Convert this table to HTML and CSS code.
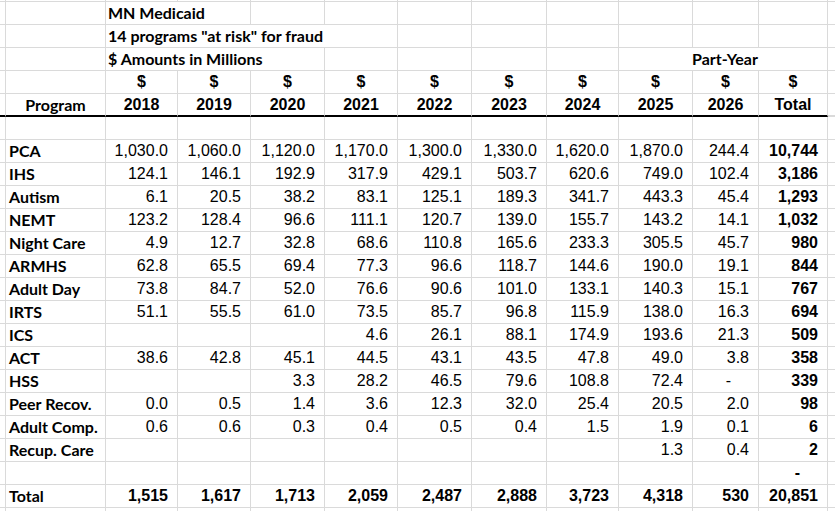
FILE: index.html
```html
<!DOCTYPE html>
<html>
<head>
<meta charset="utf-8">
<link rel="stylesheet" href="styles.css">
</head>
<body>
<div class="sheet">
  <div class="row top"><div class="c"></div><div class="c"></div><div class="c"></div><div class="c"></div><div class="c"></div><div class="c"></div><div class="c"></div><div class="c"></div><div class="c"></div><div class="c"></div><div class="c"></div><div class="c"></div><div class="c end"></div></div>

  <div class="row"><div class="c"></div><div class="c"></div><div class="c t s2">MN Medicaid</div><div class="c"></div><div class="c"></div><div class="c"></div><div class="c"></div><div class="c"></div><div class="c"></div><div class="c"></div><div class="c"></div><div class="c end"></div></div>

  <div class="row"><div class="c"></div><div class="c"></div><div class="c t s4">14 programs "at risk" for fraud</div><div class="c"></div><div class="c"></div><div class="c"></div><div class="c"></div><div class="c"></div><div class="c"></div><div class="c end"></div></div>

  <div class="row"><div class="c"></div><div class="c"></div><div class="c t s3">$ Amounts in Millions</div><div class="c"></div><div class="c"></div><div class="c"></div><div class="c"></div><div class="c t s3 pc">Part-Year</div><div class="c end"></div></div>

  <div class="row"><div class="c"></div><div class="c"></div><div class="c h">$</div><div class="c h">$</div><div class="c h">$</div><div class="c h">$</div><div class="c h">$</div><div class="c h">$</div><div class="c h">$</div><div class="c h">$</div><div class="c h">$</div><div class="c h">$</div><div class="c end"></div></div>

  <div class="row hdr"><div class="c"></div><div class="c lbl ctr">Program</div><div class="c h">2018</div><div class="c h">2019</div><div class="c h">2020</div><div class="c h">2021</div><div class="c h">2022</div><div class="c h">2023</div><div class="c h">2024</div><div class="c h">2025</div><div class="c h">2026</div><div class="c h">Total</div><div class="c end"></div></div>

  <div class="row"><div class="c"></div><div class="c"></div><div class="c"></div><div class="c"></div><div class="c"></div><div class="c"></div><div class="c"></div><div class="c"></div><div class="c"></div><div class="c"></div><div class="c"></div><div class="c"></div><div class="c end"></div></div>

  <div class="row"><div class="c"></div><div class="c lbl">PCA</div><div class="c n">1,030.0</div><div class="c n">1,060.0</div><div class="c n">1,120.0</div><div class="c n">1,170.0</div><div class="c n">1,300.0</div><div class="c n">1,330.0</div><div class="c n">1,620.0</div><div class="c n">1,870.0</div><div class="c n">244.4</div><div class="c n b">10,744</div><div class="c end"></div></div>

  <div class="row"><div class="c"></div><div class="c lbl">IHS</div><div class="c n">124.1</div><div class="c n">146.1</div><div class="c n">192.9</div><div class="c n">317.9</div><div class="c n">429.1</div><div class="c n">503.7</div><div class="c n">620.6</div><div class="c n">749.0</div><div class="c n">102.4</div><div class="c n b">3,186</div><div class="c end"></div></div>

  <div class="row"><div class="c"></div><div class="c lbl">Autism</div><div class="c n">6.1</div><div class="c n">20.5</div><div class="c n">38.2</div><div class="c n">83.1</div><div class="c n">125.1</div><div class="c n">189.3</div><div class="c n">341.7</div><div class="c n">443.3</div><div class="c n">45.4</div><div class="c n b">1,293</div><div class="c end"></div></div>

  <div class="row"><div class="c"></div><div class="c lbl">NEMT</div><div class="c n">123.2</div><div class="c n">128.4</div><div class="c n">96.6</div><div class="c n">111.1</div><div class="c n">120.7</div><div class="c n">139.0</div><div class="c n">155.7</div><div class="c n">143.2</div><div class="c n">14.1</div><div class="c n b">1,032</div><div class="c end"></div></div>

  <div class="row"><div class="c"></div><div class="c lbl">Night Care</div><div class="c n">4.9</div><div class="c n">12.7</div><div class="c n">32.8</div><div class="c n">68.6</div><div class="c n">110.8</div><div class="c n">165.6</div><div class="c n">233.3</div><div class="c n">305.5</div><div class="c n">45.7</div><div class="c n b">980</div><div class="c end"></div></div>

  <div class="row"><div class="c"></div><div class="c lbl">ARMHS</div><div class="c n">62.8</div><div class="c n">65.5</div><div class="c n">69.4</div><div class="c n">77.3</div><div class="c n">96.6</div><div class="c n">118.7</div><div class="c n">144.6</div><div class="c n">190.0</div><div class="c n">19.1</div><div class="c n b">844</div><div class="c end"></div></div>

  <div class="row"><div class="c"></div><div class="c lbl">Adult Day</div><div class="c n">73.8</div><div class="c n">84.7</div><div class="c n">52.0</div><div class="c n">76.6</div><div class="c n">90.6</div><div class="c n">101.0</div><div class="c n">133.1</div><div class="c n">140.3</div><div class="c n">15.1</div><div class="c n b">767</div><div class="c end"></div></div>

  <div class="row"><div class="c"></div><div class="c lbl">IRTS</div><div class="c n">51.1</div><div class="c n">55.5</div><div class="c n">61.0</div><div class="c n">73.5</div><div class="c n">85.7</div><div class="c n">96.8</div><div class="c n">115.9</div><div class="c n">138.0</div><div class="c n">16.3</div><div class="c n b">694</div><div class="c end"></div></div>

  <div class="row"><div class="c"></div><div class="c lbl">ICS</div><div class="c n"></div><div class="c n"></div><div class="c n"></div><div class="c n">4.6</div><div class="c n">26.1</div><div class="c n">88.1</div><div class="c n">174.9</div><div class="c n">193.6</div><div class="c n">21.3</div><div class="c n b">509</div><div class="c end"></div></div>

  <div class="row"><div class="c"></div><div class="c lbl">ACT</div><div class="c n">38.6</div><div class="c n">42.8</div><div class="c n">45.1</div><div class="c n">44.5</div><div class="c n">43.1</div><div class="c n">43.5</div><div class="c n">47.8</div><div class="c n">49.0</div><div class="c n">3.8</div><div class="c n b">358</div><div class="c end"></div></div>

  <div class="row"><div class="c"></div><div class="c lbl">HSS</div><div class="c n"></div><div class="c n"></div><div class="c n">3.3</div><div class="c n">28.2</div><div class="c n">46.5</div><div class="c n">79.6</div><div class="c n">108.8</div><div class="c n">72.4</div><div class="c n dash">-</div><div class="c n b">339</div><div class="c end"></div></div>

  <div class="row"><div class="c"></div><div class="c lbl">Peer Recov.</div><div class="c n">0.0</div><div class="c n">0.5</div><div class="c n">1.4</div><div class="c n">3.6</div><div class="c n">12.3</div><div class="c n">32.0</div><div class="c n">25.4</div><div class="c n">20.5</div><div class="c n">2.0</div><div class="c n b">98</div><div class="c end"></div></div>

  <div class="row"><div class="c"></div><div class="c lbl">Adult Comp.</div><div class="c n">0.6</div><div class="c n">0.6</div><div class="c n">0.3</div><div class="c n">0.4</div><div class="c n">0.5</div><div class="c n">0.4</div><div class="c n">1.5</div><div class="c n">1.9</div><div class="c n">0.1</div><div class="c n b">6</div><div class="c end"></div></div>

  <div class="row"><div class="c"></div><div class="c lbl">Recup. Care</div><div class="c n"></div><div class="c n"></div><div class="c n"></div><div class="c n"></div><div class="c n"></div><div class="c n"></div><div class="c n"></div><div class="c n">1.3</div><div class="c n">0.4</div><div class="c n b">2</div><div class="c end"></div></div>

  <div class="row"><div class="c"></div><div class="c"></div><div class="c"></div><div class="c"></div><div class="c"></div><div class="c"></div><div class="c"></div><div class="c"></div><div class="c"></div><div class="c"></div><div class="c"></div><div class="c n b dash">-</div><div class="c end"></div></div>

  <div class="row"><div class="c"></div><div class="c lbl">Total</div><div class="c n b">1,515</div><div class="c n b">1,617</div><div class="c n b">1,713</div><div class="c n b">2,059</div><div class="c n b">2,487</div><div class="c n b">2,888</div><div class="c n b">3,723</div><div class="c n b">4,318</div><div class="c n b">530</div><div class="c n b">20,851</div><div class="c end"></div></div>

  <div class="row"><div class="c"></div><div class="c"></div><div class="c"></div><div class="c"></div><div class="c"></div><div class="c"></div><div class="c"></div><div class="c"></div><div class="c"></div><div class="c"></div><div class="c"></div><div class="c"></div><div class="c end"></div></div>
</div>
</body>
</html>
```

FILE: styles.css
```css
html, body {
  margin: 0;
  padding: 0;
  background: #ffffff;
  overflow: hidden;
}

body {
  font-family: "Liberation Sans", Arial, sans-serif;
  font-size: 16px;
  color: #000000;
}

.sheet {
  width: 835px;
}

.row {
  display: grid;
  grid-template-columns: 6px 100px 72px 73px 74px 73px 74px 75px 72px 74px 66px 69px 1fr;
  height: 23px;
}

.row.top {
  height: 2px;
}

.c {
  box-sizing: border-box;
  border-right: 1px solid #dadada;
  border-bottom: 1px solid #dadada;
  line-height: 22px;
  white-space: nowrap;
  overflow: visible;
}

.row.top .c {
  line-height: 0;
}

.c.end {
  border-right: none;
}

.s2 { grid-column: span 2; }
.s3 { grid-column: span 3; }
.s4 { grid-column: span 4; }

.t {
  font-family: Lato, "Open Sans", sans-serif;
  font-weight: 700;
  padding-left: 2px;
}

.t.pc {
  text-align: center;
  padding-left: 4px;
}

.lbl {
  font-family: Lato, "Open Sans", sans-serif;
  font-weight: 700;
  padding-left: 3px;
}

.lbl.ctr {
  text-align: center;
  padding-left: 0;
}

.h {
  font-weight: 700;
  text-align: center;
}

.n {
  text-align: right;
  padding-right: 9px;
}

.b {
  font-weight: 700;
}

.n.dash {
  padding-right: 27px;
}

.row.hdr .c {
  border-bottom: 2px solid #000000;
  line-height: 21px;
}

.row.hdr .c.end {
  border-bottom-color: #dadada;
}
```
